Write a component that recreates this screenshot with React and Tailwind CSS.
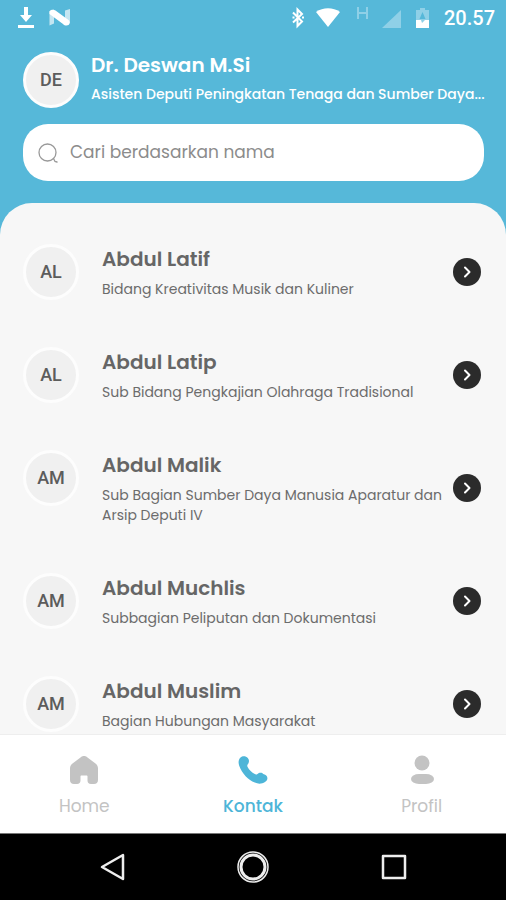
import React, { useState } from "react";

const contacts = [
  { initials: "AL", name: "Abdul Latif", unit: "Bidang Kreativitas Musik dan Kuliner" },
  { initials: "AL", name: "Abdul Latip", unit: "Sub Bidang Pengkajian Olahraga Tradisional" },
  { initials: "AM", name: "Abdul Malik", unit: "Sub Bagian Sumber Daya Manusia Aparatur dan Arsip Deputi IV" },
  { initials: "AM", name: "Abdul Muchlis", unit: "Subbagian Peliputan dan Dokumentasi" },
  { initials: "AM", name: "Abdul Muslim", unit: "Bagian Hubungan Masyarakat" },
];

const tabs = [
  { label: "Home", icon: HomeIcon },
  { label: "Kontak", icon: PhoneIcon },
  { label: "Profil", icon: ProfileIcon },
];

export default function App() {
  const [query, setQuery] = useState("");
  const [active, setActive] = useState("Kontak");

  const visible = contacts.filter((c) =>
    c.name.toLowerCase().includes(query.toLowerCase())
  );

  return (
    <div className="h-screen flex flex-col bg-[#56b8d9] font-['Poppins','Inter',sans-serif]">
      <StatusBar />

      {/* Header */}
      <header className="pl-[23px] pr-[22px] pt-[15px] pb-[22px]">
        <div className="flex items-center gap-3">
          <Avatar initials="DE" />
          <div className="min-w-0 flex-1 text-white">
            <h1 className="text-xl leading-7 font-semibold">Dr. Deswan M.Si</h1>
            <p className="text-sm leading-[30px] font-medium whitespace-nowrap">
              Asisten Deputi Peningkatan Tenaga dan Sumber Daya...
            </p>
          </div>
        </div>

        <label className="mt-[15px] h-[57px] flex items-center gap-3 px-[15px] bg-white rounded-[25px]">
          <SearchIcon />
          <input
            type="text"
            aria-label="Cari berdasarkan nama"
            placeholder="Cari berdasarkan nama"
            value={query}
            onChange={(e) => setQuery(e.target.value)}
            className="flex-1 min-w-0 bg-transparent outline-none text-[17px] text-[#777] placeholder:text-[#8c8c8c]"
          />
        </label>
      </header>

      {/* Contact list */}
      <main className="flex-1 min-h-0 overflow-y-auto [scrollbar-width:none] bg-[#f7f7f7] rounded-t-[32px] pl-[23px] pr-[25px] pt-[41px]">
        <ul className="space-y-[47px]">
          {visible.map((c) => (
            <ContactRow key={c.name} {...c} />
          ))}
        </ul>
      </main>

      {/* Tab bar */}
      <nav className="shrink-0 h-[99px] grid grid-cols-3 bg-white border-t border-[#eeeeee]">
        {tabs.map(({ label, icon: Icon }) => (
          <button
            key={label}
            onClick={() => setActive(label)}
            className={`flex flex-col items-center gap-2 pt-5 ${
              active === label ? "text-[#4db5d8]" : "text-[#c3c3c3]"
            }`}
          >
            <Icon />
            <span className={`text-[17px] leading-[26px] ${active === label ? "font-medium" : ""}`}>
              {label}
            </span>
          </button>
        ))}
      </nav>

      <SystemBar />
    </div>
  );
}

// Helper Components

function Avatar({ initials }) {
  return (
    <div className="size-14 shrink-0 rounded-full bg-[#f0f0f0] border-3 border-[#fdfdfd] flex items-center justify-center font-['Roboto',sans-serif] text-lg font-medium text-[#5c5c5c]">
      {initials}
    </div>
  );
}

function ContactRow({ initials, name, unit }) {
  return (
    <li className="flex items-center">
      <div className="self-start">
        <Avatar initials={initials} />
      </div>
      <div className="flex-1 min-w-0 pl-[23px] pr-2 pb-px">
        <h2 className="text-xl leading-[30px] font-semibold text-[#666]">{name}</h2>
        <p className="mt-[5px] text-sm leading-5 text-[#6c6c6c]">{unit}</p>
      </div>
      <button
        aria-label={`Buka ${name}`}
        className="size-7 shrink-0 rounded-full bg-[#2b2b2b] flex items-center justify-center"
      >
        <svg width="14" height="14" viewBox="0 0 14 14" fill="none" stroke="#fff" strokeWidth="2" strokeLinecap="round" strokeLinejoin="round">
          <path d="M5 2.500 9.500 7 5 11.500" />
        </svg>
      </button>
    </li>
  );
}

function StatusBar() {
  return (
    <div className="h-9 shrink-0 flex items-center px-[11px] text-white font-['Roboto',sans-serif]">
      <svg width="62" height="24" viewBox="0 0 62 24" fill="#fff">
        <path d="M13 1h4v8h4l-6 7-6-7h4z" />
        <path d="M7 19h16v3H7z" />
        <path d="M38.500 5 43 3.500v14L38.500 19.500zM54 4.500l5-1.500v14L54 19z" opacity=".65" />
        <path d="M38.500 5.500c1-2 4-2.500 6-1L57.500 14c2 2 1.500 5.500-2 5.500-1.500 0-2.500-.5-3.500-1.500L38.500 8z" />
      </svg>
      <div className="ml-auto flex items-center">
        <svg width="146" height="24" viewBox="0 0 146 24" fill="#fff">
          {/* bluetooth */}
          <path d="m7 6.500 9 9-4.500 4.500V3.500L16 8l-9 8.500" fill="none" stroke="#fff" strokeWidth="2" />
          <path d="M6.500 10.500h2v2h-2zM16 10.500h2v2h-2z" />
          {/* wifi */}
          <path d="M30 6C37 1 47 1 54 6L42 21z" />
          {/* signal */}
          <path d="M72 1v12M81 1v12M72 7h9" fill="none" stroke="#8fd0e7" strokeWidth="2" />
          <path d="M115 4v18H96z" fill="#8fd0e7" />
          {/* battery */}
          <path d="M134 2h5v2h4v18h-13V4h4z" fill="#8fd0e7" />
          <path d="m136.500 6-3 7h6z" fill="#56b8d9" />
          <path d="M130 14h5l1 3 3-3h4v8h-13z" />
        </svg>
        <span className="ml-3 text-xl leading-6 font-medium">20.57</span>
      </div>
    </div>
  );
}

function SearchIcon() {
  return (
    <svg width="20" height="20" viewBox="0 0 20 20" fill="none" stroke="#999" strokeWidth="1.300" strokeLinecap="round">
      <circle cx="9.500" cy="9.500" r="8.500" />
      <path d="m15.500 15.500 1.500 3 2 .5" />
    </svg>
  );
}

function HomeIcon() {
  return (
    <svg width="30" height="30" viewBox="0 0 30 30" fill="currentColor">
      <path d="M15 1c-1.500 0-2.500.600-3.500 1.400L3.500 8.500C1.800 9.800 1 11.500 1 13.500V25c0 2.500 1.500 4 4 4h3c2.300 0 3.500-1.200 3.500-3.500v-4c0-.7.300-1 1-1h5c.7 0 1 .3 1 1v4c0 2.300 1.200 3.500 3.500 3.500h3c2.500 0 4-1.500 4-4V13.500c0-2-.8-3.700-2.500-5l-8-6.100C17.500 1.600 16.500 1 15 1z" />
    </svg>
  );
}

function PhoneIcon() {
  return (
    <svg width="30" height="30" viewBox="0 0 30 30" fill="currentColor">
      <path d="M2.500 2.500C4.500.5 8 .8 9.800 3c1.700 2 1.500 4.500 0 6.300-.7.900-.7 1.600-.2 2.600 1.600 3 4.200 5.500 7.200 7.200 1 .5 1.800.4 2.700-.2 1.200-.9 2.400-1.600 4-1.100 1 .3 1.500 1.200 2.400 1.500 1.800.3 3.300 1.600 3.500 3.700.1 1.800-1 3-2.400 4-3 2-6.800 2.200-10.200.6C10.500 25.300 3.800 18.500 1.200 10.800.2 7.800.3 4.800 2.500 2.500z" />
    </svg>
  );
}

function ProfileIcon() {
  return (
    <svg width="30" height="30" viewBox="0 0 30 30" fill="currentColor">
      <circle cx="15" cy="8" r="7.500" />
      <rect x="4" y="19" width="23" height="10" rx="8" ry="5" />
    </svg>
  );
}

function SystemBar() {
  return (
    <div className="shrink-0 h-[67px] bg-black border-t border-[#777] flex items-center justify-center gap-[109px]">
      <button aria-label="Kembali">
        <svg width="32" height="32" viewBox="0 0 32 32" fill="none" stroke="#eee" strokeWidth="2.500" strokeLinejoin="round">
          <path d="M27 4v24L6 16z" />
        </svg>
      </button>
      <button aria-label="Beranda">
        <svg width="32" height="32" viewBox="0 0 32 32" fill="none" stroke="#eee">
          <circle cx="16" cy="16" r="15" strokeWidth="1.500" />
          <circle cx="16" cy="16" r="12" strokeWidth="3" />
        </svg>
      </button>
      <button aria-label="Aplikasi terbaru">
        <svg width="32" height="32" viewBox="0 0 32 32" fill="none" stroke="#eee" strokeWidth="2.500" strokeLinejoin="round">
          <path d="M5 5h22v22H5z" />
        </svg>
      </button>
    </div>
  );
}
